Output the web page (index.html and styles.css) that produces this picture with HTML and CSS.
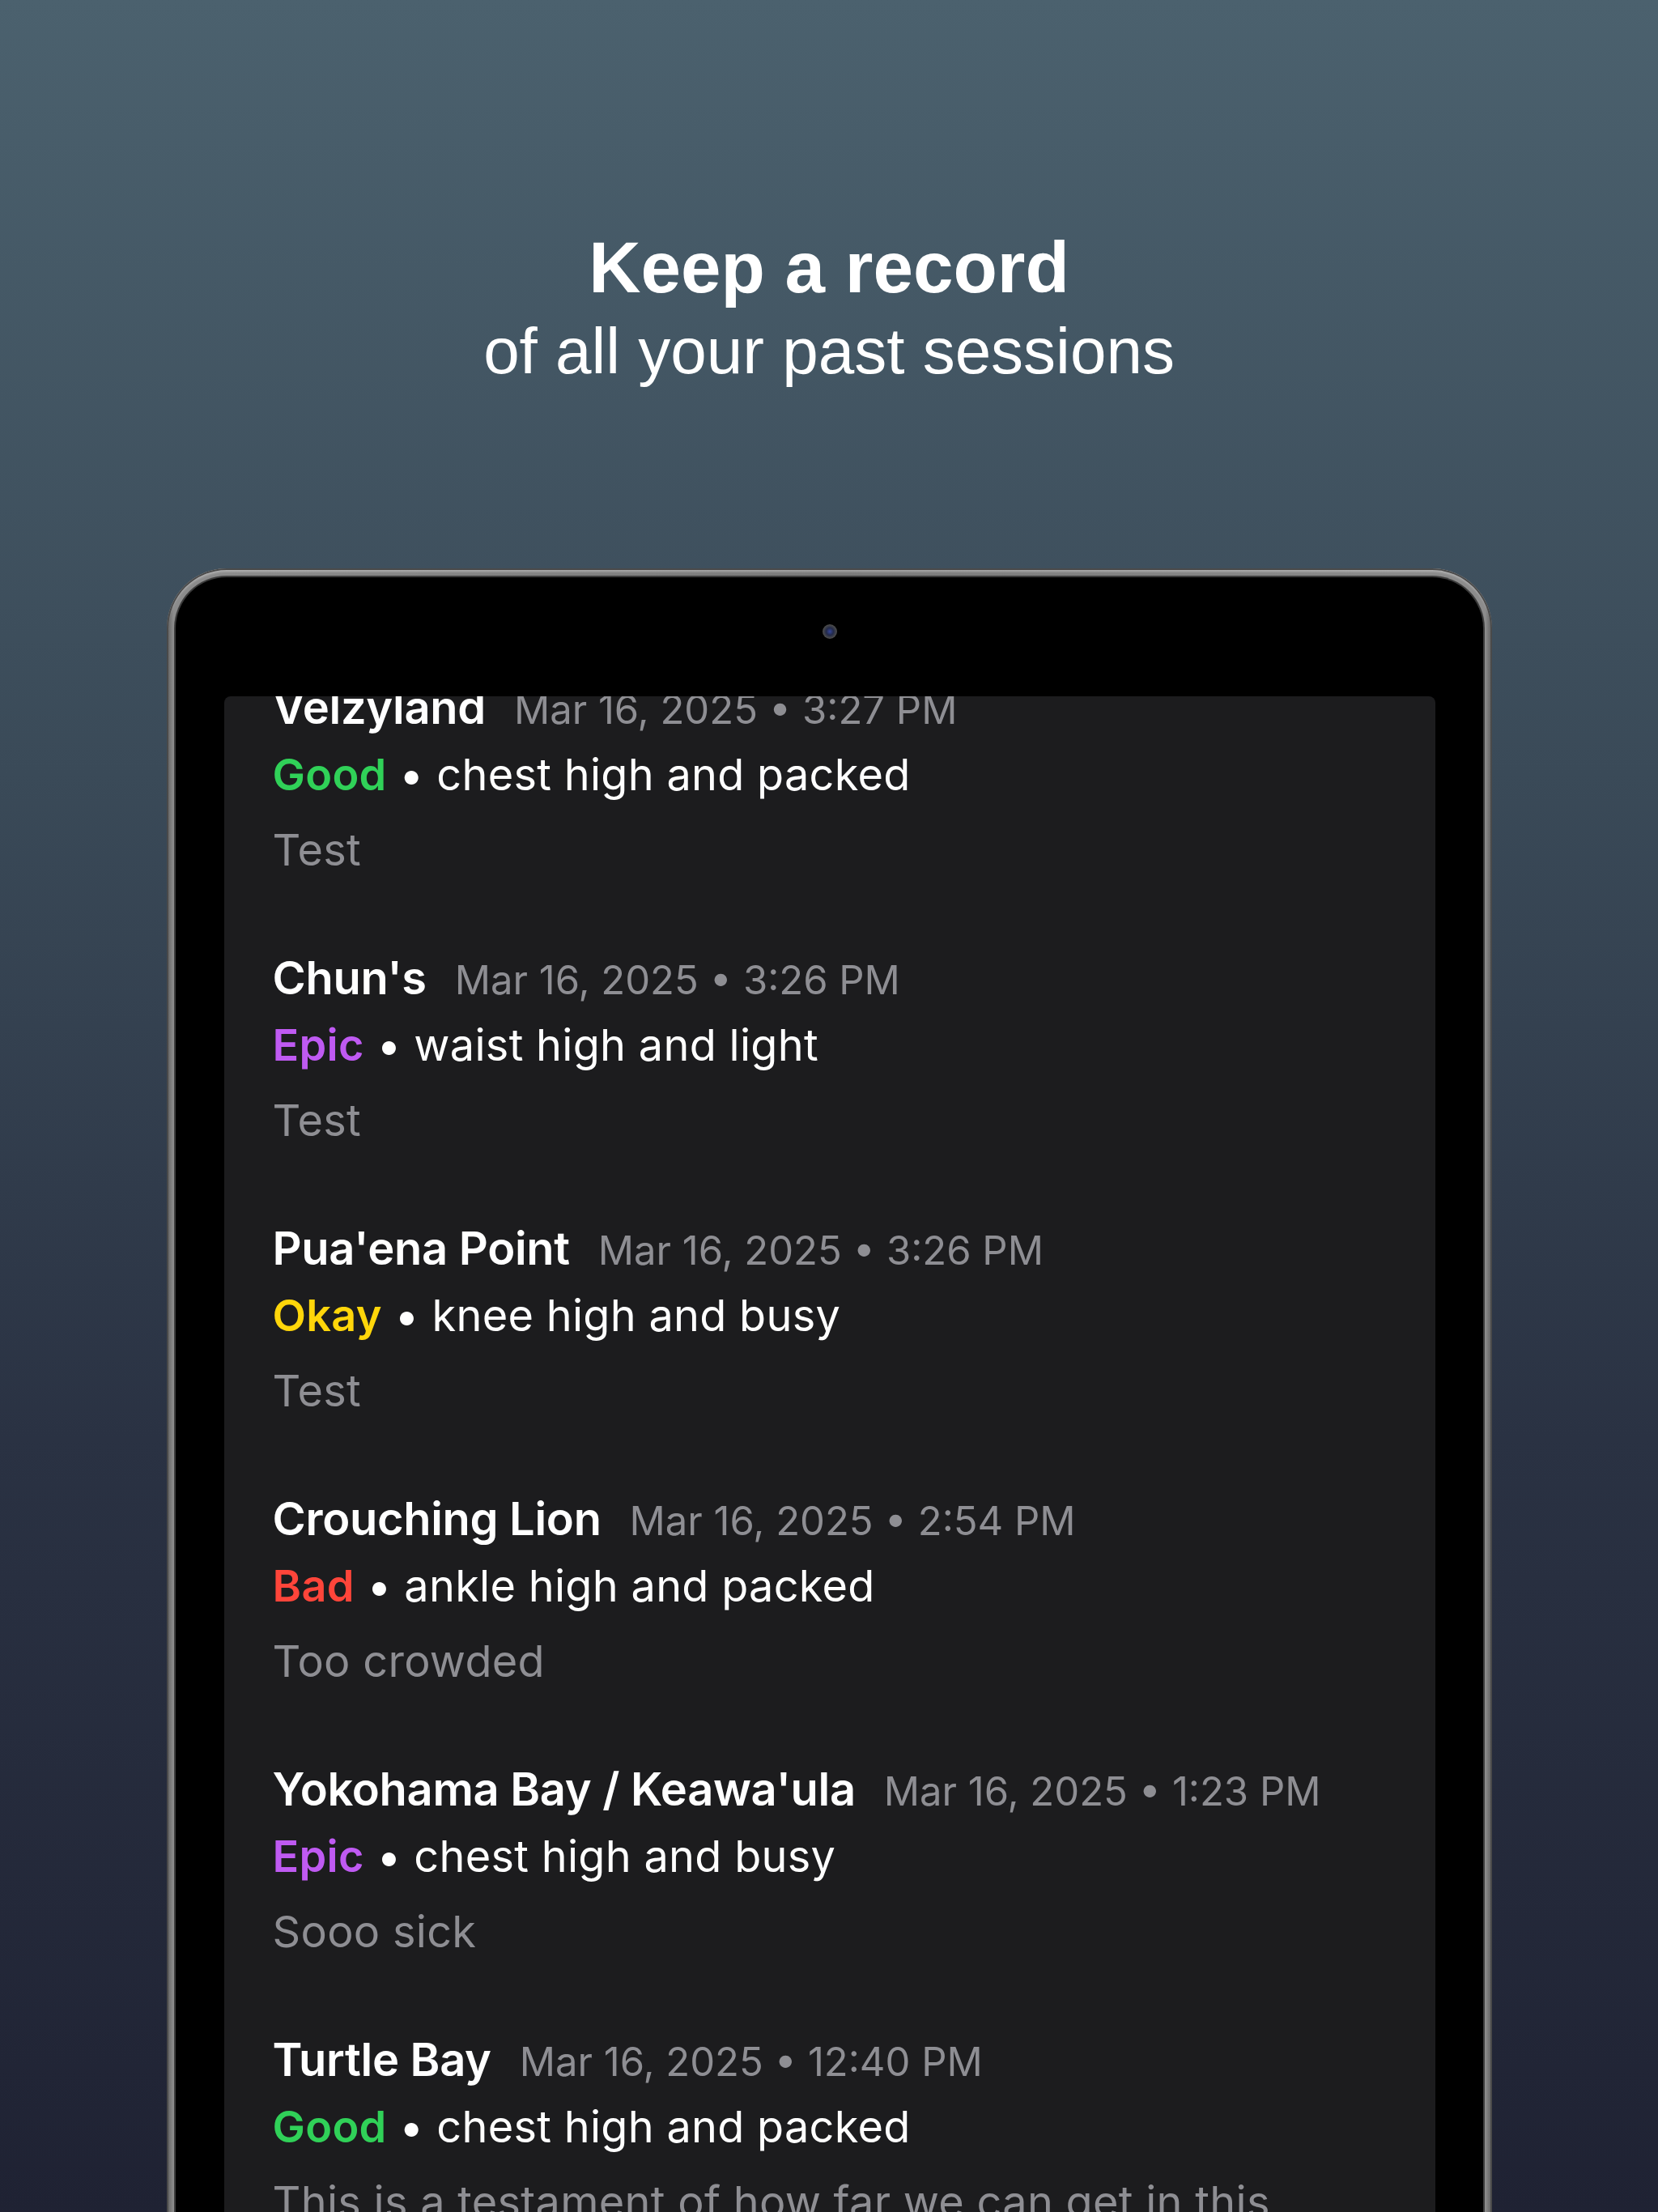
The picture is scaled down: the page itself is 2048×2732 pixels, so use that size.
FILE: index.html
```html
<!DOCTYPE html>
<html lang="en">
<head>
  <meta charset="UTF-8" />
  <meta name="viewport" content="width=device-width, initial-scale=1.0"/>
  <title>Keep a record</title>
  <link rel="stylesheet" href="styles.css">
</head>
<body>

<div class="page">
  <!-- headline -->
  <div class="hero">
    <h1>Keep a record</h1>
    <p>of all your past sessions</p>
  </div>

  <!-- tablet frame -->
  <div class="device">
    <div class="bezel">
      <div class="camera"></div>
      <div class="screen">
        <div class="session-list">

          <div class="session">
            <div class="session-head"><span class="spot">Velzyland</span><span class="when">Mar 16, 2025 • 3:27 PM</span></div>
            <div class="session-rating"><span class="rating good">Good</span> • chest high and packed</div>
            <div class="session-note">Test</div>
          </div>

          <div class="session">
            <div class="session-head"><span class="spot">Chun's</span><span class="when">Mar 16, 2025 • 3:26 PM</span></div>
            <div class="session-rating"><span class="rating epic">Epic</span> • waist high and light</div>
            <div class="session-note">Test</div>
          </div>

          <div class="session">
            <div class="session-head"><span class="spot">Pua'ena Point</span><span class="when">Mar 16, 2025 • 3:26 PM</span></div>
            <div class="session-rating"><span class="rating okay">Okay</span> • knee high and busy</div>
            <div class="session-note">Test</div>
          </div>

          <div class="session">
            <div class="session-head"><span class="spot">Crouching Lion</span><span class="when">Mar 16, 2025 • 2:54 PM</span></div>
            <div class="session-rating"><span class="rating bad">Bad</span> • ankle high and packed</div>
            <div class="session-note">Too crowded</div>
          </div>

          <div class="session">
            <div class="session-head"><span class="spot">Yokohama Bay / Keawa'ula</span><span class="when">Mar 16, 2025 • 1:23 PM</span></div>
            <div class="session-rating"><span class="rating epic">Epic</span> • chest high and busy</div>
            <div class="session-note">Sooo sick</div>
          </div>

          <div class="session">
            <div class="session-head"><span class="spot">Turtle Bay</span><span class="when">Mar 16, 2025 • 12:40 PM</span></div>
            <div class="session-rating"><span class="rating good">Good</span> • chest high and packed</div>
            <div class="session-note">This is a testament of how far we can get in this<br>sport when we keep showing up</div>
          </div>

        </div>
      </div>
    </div>
  </div>
</div>

</body>
</html>
```

FILE: styles.css
```css
/* page + headline */
body { margin: 0; font-family: "Liberation Sans", Arial, sans-serif; }
.page {
  width: 2048px;
  height: 2732px;
  overflow: hidden;
  background: linear-gradient(180deg, #4b616e 0%, #3a4a58 35%, #2a3243 65%, #1f2233 100%);
  display: flex;
  flex-direction: column;
  align-items: center;
}
.hero { padding-top: 280px; text-align: center; color: #fff; }
.hero h1 { margin: 0; font-size: 89px; line-height: 100px; font-weight: bold; }
.hero p { margin: 4px 0 0; font-size: 80px; line-height: 100px; font-weight: normal; }

/* tablet */
.device {
  margin-top: 218px;
  width: 1637px;
  height: 2100px;
  box-sizing: border-box;
  padding: 11px 11px 0;
  border-radius: 74px 74px 0 0;
  background: linear-gradient(90deg, #5c5c5c 0%, #8c8c8c 0.5%, #7a7a7a 50%, #8c8c8c 99.5%, #5c5c5c 100%);
  box-shadow: inset 0 0 0 2px #4a4a4a, inset 0 4px 3px rgba(255,255,255,0.35);
  display: flex;
}
.bezel {
  flex: 1;
  display: flex;
  flex-direction: column;
  background: #000;
  border-radius: 63px 63px 0 0;
  padding: 0 59px 0 60px;
  box-shadow: 0 0 0 2px #3c3c3c;
}
.camera {
  align-self: center;
  width: 18px;
  height: 18px;
  margin: 58px 0 71px;
  border-radius: 50%;
  background: radial-gradient(circle, #35469a 0%, #232a48 35%, #4a4a4a 65%, #1a1a1a 100%);
}
.screen {
  flex: 1;
  background: #1c1c1e;
  border-radius: 8px 8px 0 0;
  overflow: hidden;
}

/* session rows */
.session-list { margin-top: -26px; padding-left: 60px; font-family: Inter, "Noto Sans", sans-serif; }
.session { padding-bottom: 68px; }
.session-head { display: flex; align-items: baseline; gap: 35px; }
.spot { color: #fff; font-size: 56px; line-height: 80px; font-weight: 600; letter-spacing: -0.3px; }
.when { color: #8e8e93; font-size: 49px; line-height: 60px; }
.session-rating { color: #fff; font-size: 54px; line-height: 86px; letter-spacing: 0.3px; }
.session-note { color: #8e8e93; font-size: 54px; line-height: 100px; letter-spacing: 0.3px; }
.rating { font-weight: 600; }
.rating.good { color: #30d158; }
.rating.epic { color: #bf5af2; }
.rating.okay { color: #ffd60a; }
.rating.bad { color: #ff453a; }
```
